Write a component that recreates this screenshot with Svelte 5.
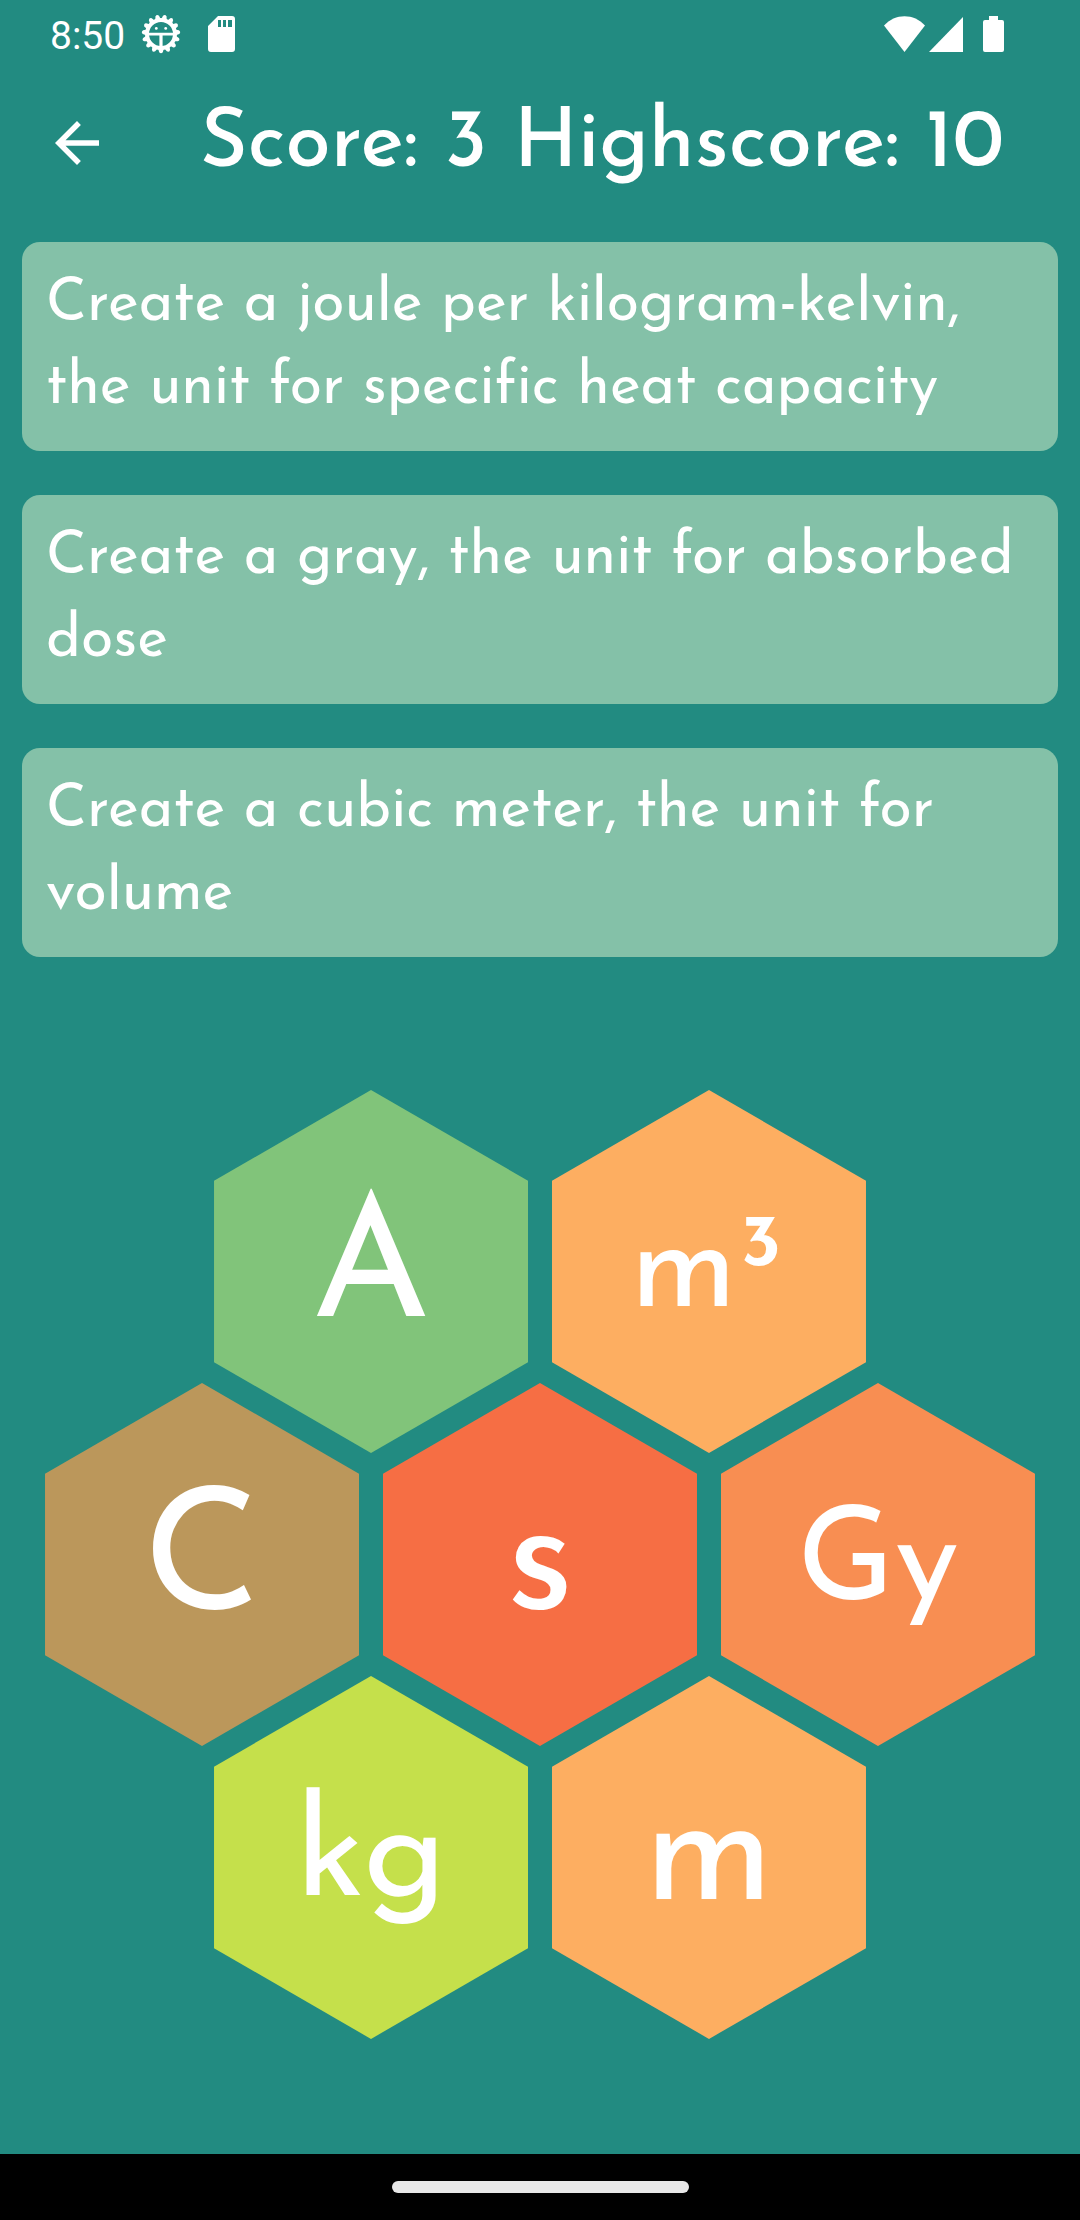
<script>
  const score = 3;
  const highscore = 10;

  const tasks = [
    'Create a joule per kilogram-kelvin, the unit for specific heat capacity',
    'Create a gray, the unit for absorbed dose',
    'Create a cubic meter, the unit for volume'
  ];

  const rows = [
    [
      { label: 'A', tone: 'green', size: 'xl' },
      { label: 'm³', tone: 'amber', size: 'sm' }
    ],
    [
      { label: 'C', tone: 'brown', size: 'xl' },
      { label: 's', tone: 'red', size: 'xl' },
      { label: 'Gy', tone: 'orange', size: 'sm' }
    ],
    [
      { label: 'kg', tone: 'lime', size: 'md' },
      { label: 'm', tone: 'amber', size: 'lg' }
    ]
  ];

  const teeth = Array.from({ length: 15 }, (_, i) => i * 24 + 12);
</script>

<div class="screen">
  <div class="status">
    <span class="time">8:50</span>
    <svg class="gear" viewBox="0 0 40 40" aria-hidden="true">
      {#each teeth as angle}
        <path d="M17 6 L18.2 1.8 Q20 -0.4 21.8 1.8 L23 6Z" transform="rotate({angle} 20 20)" />
      {/each}
      <circle cx="20" cy="20" r="14" class="ring" />
      <path d="M7 18.8H33V21.4H21.6V33H18.4V21.4H7Z" />
      <circle cx="15.3" cy="14.4" r="1.4" />
      <circle cx="24.7" cy="14.4" r="1.4" />
    </svg>
    <svg class="sd" viewBox="0 0 27 36" aria-hidden="true">
      <path
        fill-rule="evenodd"
        d="M10 0H24Q27 0 27 3V33Q27 36 24 36H3Q0 36 0 33V10ZM10 4V11H13V4ZM15 4V11H18V4ZM20 4V11H24V4Z"
      />
    </svg>
    <span class="spacer"></span>
    <svg class="wifi" viewBox="0 0 41 36" aria-hidden="true">
      <path d="M0 9.5C11-3 30-3 41 9.5L20.5 36Z" />
    </svg>
    <svg class="signal" viewBox="0 0 34 36" aria-hidden="true"><path d="M34 1V36H0Z" /></svg>
    <svg class="battery" viewBox="0 0 21 36" aria-hidden="true">
      <path d="M6 0H15V4H19Q21 4 21 6V34Q21 36 19 36H2Q0 36 0 34V6Q0 4 2 4H6Z" />
    </svg>
  </div>

  <header>
    <button class="back" aria-label="Back">
      <svg viewBox="0 0 24 24" aria-hidden="true">
        <path d="M20 11H7.83l5.59-5.59L12 4l-8 8 8 8 1.41-1.41L7.83 13H20v-2z" />
      </svg>
    </button>
    <h1>Score: {score} Highscore: {highscore}</h1>
  </header>

  <main>
    <ul class="tasks">
      {#each tasks as task}
        <li>{task}</li>
      {/each}
    </ul>

    <div class="comb">
      {#each rows as row}
        <div class="row">
          {#each row as cell}
            <button class="hex {cell.tone} {cell.size}">{cell.label}</button>
          {/each}
        </div>
      {/each}
    </div>
  </main>

  <div class="gesture"><span class="pill"></span></div>
</div>

<style>
  :global(body) {
    margin: 0;
    background: #228b81;
  }

  .screen {
    display: flex;
    flex-direction: column;
    min-height: 100vh;
    background: #228b81;
    color: #fff;
    font-family: 'Josefin Sans', Lato, sans-serif;
  }

  svg {
    display: block;
    fill: #fff;
    flex: none;
  }

  .status {
    display: flex;
    align-items: center;
    height: 66px;
    padding: 1px 76px 0 50px;
    box-sizing: border-box;
  }

  .time {
    padding-top: 4px;
    font: 400 39px/60px Roboto, sans-serif;
  }

  .gear {
    width: 40px;
    height: 40px;
    margin-left: 16px;
  }

  .ring {
    fill: none;
    stroke: #fff;
    stroke-width: 4;
  }

  .sd {
    width: 27px;
    height: 36px;
    margin-left: 27px;
  }

  .spacer {
    flex: 1;
  }

  .wifi {
    width: 41px;
    height: 36px;
  }

  .signal {
    width: 34px;
    height: 36px;
    margin-left: 4px;
  }

  .battery {
    width: 21px;
    height: 36px;
    margin-left: 20px;
  }

  header {
    display: flex;
    align-items: center;
    gap: 90px;
    height: 154px;
    padding: 0 44px;
  }

  button {
    border: 0;
    padding: 0;
    color: inherit;
    font-family: inherit;
    cursor: pointer;
  }

  .back {
    flex: none;
    background: none;
  }

  .back svg {
    width: 66px;
    height: 66px;
  }

  h1 {
    margin: 0;
    padding-top: 6px;
    font-size: 82px;
    font-weight: 500;
    line-height: 96px;
    white-space: nowrap;
  }

  main {
    flex: 1;
    padding-top: 22px;
  }

  .tasks {
    display: flex;
    flex-direction: column;
    gap: 44px;
    margin: 0;
    padding: 0 22px;
    list-style: none;
  }

  .tasks li {
    padding: 22px 24px 21px;
    border-radius: 18px;
    background: #84c1a8;
    font-size: 59px;
    line-height: 83px;
    font-variant-ligatures: none;
  }

  .comb {
    padding: 133px 45px 115px;
  }

  .row {
    display: flex;
    justify-content: center;
    gap: 24px;
  }

  .row + .row {
    margin-top: -7.07%;
  }

  .hex {
    box-sizing: border-box;
    width: calc((100% - 48px) / 3);
    aspect-ratio: 314 / 363;
    padding-top: 6px;
    clip-path: polygon(50% 0, 100% 25%, 100% 75%, 50% 100%, 0 75%, 0 25%);
    font-weight: 400;
    line-height: 1;
  }

  .xl {
    font-size: 170px;
  }

  .lg {
    font-size: 158px;
  }

  .md {
    font-size: 140px;
  }

  .sm {
    font-size: 130px;
  }

  .green {
    background: #81c47a;
  }

  .amber {
    background: #fdae61;
  }

  .brown {
    background: #bb975b;
  }

  .red {
    background: #f66e44;
  }

  .orange {
    background: #f88e52;
  }

  .lime {
    background: #c5e04b;
  }

  .gesture {
    display: flex;
    align-items: center;
    justify-content: center;
    height: 66px;
    background: #000;
  }

  .pill {
    width: 297px;
    height: 12px;
    border-radius: 6px;
    background: #e8e8e8;
  }
</style>
